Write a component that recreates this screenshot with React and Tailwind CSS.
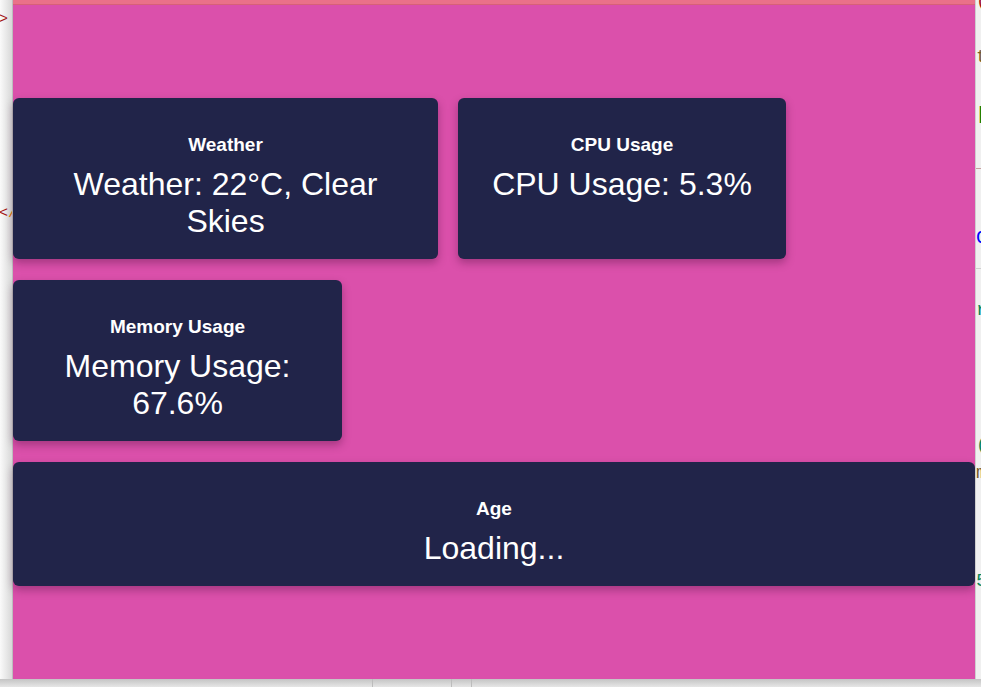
import React from 'react';

const cards = [
  { title: 'Weather', value: 'Weather: 22°C, Clear Skies', width: 'w-[425px]' },
  { title: 'CPU Usage', value: 'CPU Usage: 5.3%', width: 'w-[328px]' },
  { title: 'Memory Usage', value: 'Memory Usage: 67.6%', width: 'w-[329px]' },
  { title: 'Age', value: 'Loading...', width: 'w-full' },
];

const Card = ({ title, value, width }) => (
  <div
    className={`${width} bg-[#212449] rounded-md shadow-[0_4px_8px_rgba(60,10,50,0.35)] px-[20px] pt-[36px] pb-[19px] text-center text-white`}
  >
    <h3 className="text-[19px] leading-[22px] font-bold mb-[10px]">{title}</h3>
    <p className="text-[32px] leading-[37px]">{value}</p>
  </div>
);

const App = () => {
  return (
    <div
      className="w-[981px] h-[687px] flex flex-col overflow-hidden bg-[#dcdcdc]"
      style={{ fontFamily: '"Liberation Sans", Arial, sans-serif' }}
    >
      <div className="flex h-[679px]">
        {/* editor behind, left edge */}
        <div
          className="w-[13px] flex-shrink-0 bg-gradient-to-r from-[#fafafa] to-[#d8d8d8] border-r border-[#bdbdbd] overflow-hidden text-[15px] leading-[16px] text-[#a31515]"
          style={{ fontFamily: '"Liberation Mono", monospace' }}
        >
          <div className="mt-[12px] -ml-[1px]">&gt;</div>
          <div className="mt-[178px] -ml-[1px] whitespace-nowrap">
            &lt;<span className="text-[#e07b00]">/</span>
          </div>
        </div>

        {/* browser window */}
        <div className="w-[962px] flex-shrink-0 flex flex-col">
          <div className="h-[5px] bg-[#ea7189] border-b border-[#d86078]"></div>
          <div className="flex-1 bg-[#db50ab] pt-[93px]">
            <div className="flex flex-wrap gap-x-5 gap-y-[21px]">
              {cards.map((c) => (
                <Card key={c.title} {...c} />
              ))}
            </div>
          </div>
        </div>

        {/* editor behind, right edge */}
        <div
          className="w-[6px] flex-shrink-0 bg-[#f0f0f0] border-l border-[#cfcfcf] overflow-hidden text-[19px] leading-[20px] whitespace-nowrap"
          style={{ fontFamily: '"Liberation Mono", monospace' }}
        >
          <div className="-mt-[9px] text-[#a31515]">(</div>
          <div className="mt-[36px] text-[#795e26]">t</div>
          <div className="mt-[37px] text-[#008000]">[</div>
          <div className="mt-[44px] h-px bg-[#c8a0a0]"></div>
          <div className="mt-[59px] text-[#0000ff]">G</div>
          <div className="mt-[20px] h-px bg-[#d0d0d0]"></div>
          <div className="mt-[31px] text-[#098658]">r</div>
          <div className="mt-[115px] text-[#098658]">(</div>
          <div className="mt-[8px] text-[#795e26]">m</div>
          <div className="mt-[88px] text-[#098658]">5</div>
        </div>
      </div>

      {/* strip below the window */}
      <div className="h-[8px] flex bg-gradient-to-b from-[#c4c4c4] to-[#e6e6e6]">
        <div className="w-[373px] border-r border-[#bcbcbc]"></div>
        <div className="w-[79px] border-r border-[#bcbcbc]"></div>
        <div className="w-[20px] border-r border-[#bcbcbc]"></div>
        <div className="flex-1"></div>
      </div>
    </div>
  );
};

export default App;
